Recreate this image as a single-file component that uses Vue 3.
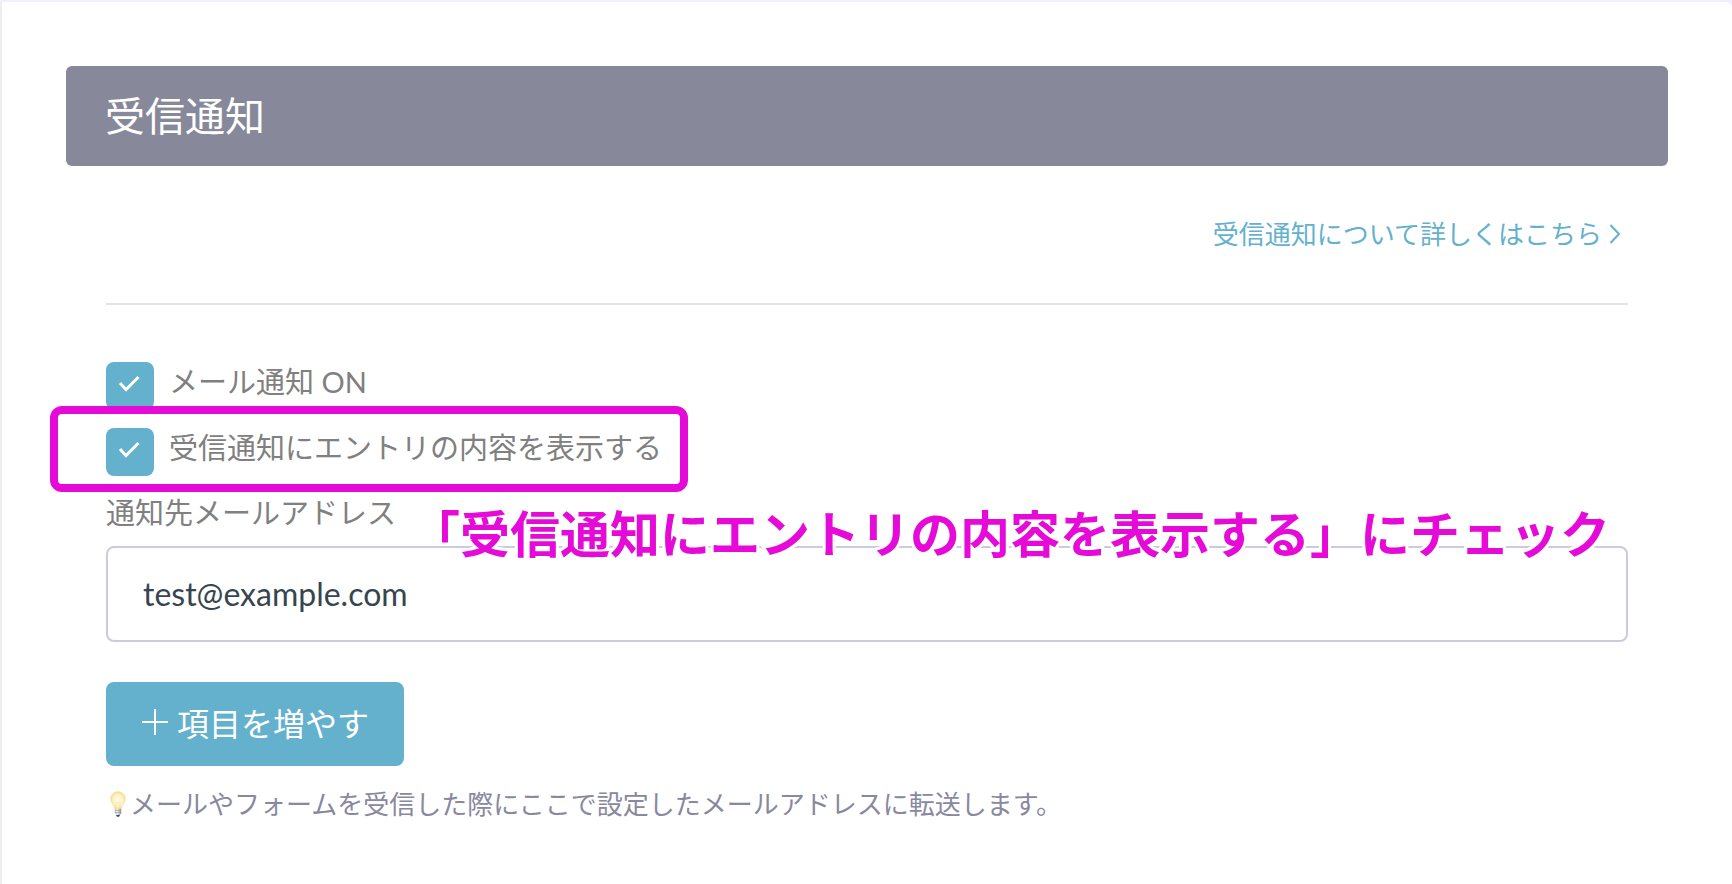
<script setup>
import { ref } from 'vue'

const mailOn = ref(true)
const showEntry = ref(true)
const email = ref('test@example.com')
</script>

<template>
  <main class="card">
    <h1 class="title">受信通知</h1>
    <section class="body">
      <div class="more">
        <a href="#" class="more-link">
          受信通知について詳しくはこちら
          <svg class="chevron" viewBox="0 0 12 20" aria-hidden="true"><path d="M1.5 1 10 10 1.5 19" /></svg>
        </a>
      </div>

      <form class="form" @submit.prevent>
        <label class="check-row">
          <span class="box">
            <input v-model="mailOn" type="checkbox" />
            <svg v-if="mailOn" viewBox="0 0 48 48" aria-hidden="true"><path d="M14 21 20 27.500 32.500 15" /></svg>
          </span>
          <span class="text">メール通知 ON</span>
        </label>

        <div class="marked">
          <label class="check-row">
            <span class="box">
              <input v-model="showEntry" type="checkbox" />
              <svg v-if="showEntry" viewBox="0 0 48 48" aria-hidden="true"><path d="M14 21 20 27.500 32.500 15" /></svg>
            </span>
            <span class="text">受信通知にエントリの内容を表示する</span>
          </label>
          <div class="frame"></div>
        </div>

        <div class="field">
          <label class="field-label" for="email">通知先メールアドレス</label>
          <input id="email" v-model="email" class="email" type="email" />
          <p class="callout">「受信通知にエントリの内容を表示する」にチェック</p>
        </div>

        <button type="button" class="add">
          <svg viewBox="0 0 28 28" aria-hidden="true"><path d="M14 1v26M1 14h26" /></svg>
          項目を増やす
        </button>
      </form>

      <p class="help">
        <svg viewBox="0 0 16 26" aria-hidden="true">
          <defs>
            <radialGradient id="glow" cx="50%" cy="50%" r="55%">
              <stop offset="0" stop-color="#fffdf0" />
              <stop offset="0.6" stop-color="#fff3c0" />
              <stop offset="1" stop-color="#f5d98a" />
            </radialGradient>
            <linearGradient id="metal">
              <stop offset="0" stop-color="#c8c8c8" />
              <stop offset="0.4" stop-color="#ececec" />
              <stop offset="1" stop-color="#8c8c8c" />
            </linearGradient>
          </defs>
          <path d="M8 .8C3.900.8.8 3.900.8 7.800c0 4 3.400 5.800 4 10h6.400c.6-4.200 4-6 4-10C15.200 3.900 12.100.8 8 .8Z" fill="url(#glow)" stroke="#f3dc9a" stroke-width=".8" />
          <path d="M6.500 17.500 5.800 11l1.500 1 .7-1 .7 1 1.500-1-.7 6.500" fill="none" stroke="#f7e3a6" stroke-width=".6" />
          <path d="M4.800 17.800h6.400v4.700L9.800 24H6.200l-1.400-1.500Z" fill="url(#metal)" />
          <path d="M4.800 19.500h6.400M4.800 21.500h6.400" stroke="#999" stroke-width=".6" />
          <path d="M6 24h4l-1 1.700H7Z" fill="#444" />
        </svg>
        <span>メールやフォームを受信した際にここで設定したメールアドレスに転送します。</span>
      </p>
    </section>
  </main>
</template>

<style>
body {
  margin: 0;
  background: #f0eeff;
}
#app {
  display: flow-root;
}
</style>

<style scoped>
.card {
  box-sizing: border-box;
  min-height: calc(100vh - 2px);
  margin-top: 2px;
  padding: 64px 64px 40px;
  border-left: 2px solid #eee;
  border-top-right-radius: 6px;
  background: #fff;
  color: #808080;
  font-family: "Lato", "Noto Sans CJK JP", sans-serif;
}
.title {
  margin: 0;
  padding: 20px 39px;
  border-radius: 6px;
  background: #88889b;
  color: #fff;
  font-size: 40px;
  font-weight: 400;
  line-height: 60px;
}
.body {
  padding: 0 40px;
}
.more {
  display: flex;
  justify-content: flex-end;
  padding: 48px 7px 49px;
  border-bottom: 2px solid #e4e4e4;
}
.more-link {
  display: flex;
  align-items: center;
  gap: 7px;
  color: #64b1ce;
  font-size: 26px;
  line-height: 40px;
  text-decoration: none;
}
.chevron {
  width: 12px;
  height: 20px;
}
.chevron path,
.box path,
.add path {
  fill: none;
  stroke: currentColor;
  stroke-width: 2;
}
.form {
  padding-top: 57px;
}
.check-row {
  display: flex;
  gap: 15px;
  height: 48px;
  margin-bottom: 18px;
}
.box {
  display: grid;
  width: 48px;
  height: 48px;
  color: #fff;
}
.box input,
.box svg {
  grid-area: 1 / 1;
  width: 48px;
  height: 48px;
  margin: 0;
}
.box input {
  appearance: none;
  border-radius: 8px;
  background: #64b1ce;
}
.box svg {
  pointer-events: none;
}
.box path {
  stroke-width: 3;
}
.text,
.field-label {
  font-size: 29px;
  line-height: 40px;
}
.marked {
  position: relative;
  width: fit-content;
}
.frame {
  position: absolute;
  inset: -22px -26px -16px -56px;
  border: 8px solid #e60ad8;
  border-radius: 12px;
  pointer-events: none;
}
.field {
  position: relative;
}
.field-label {
  display: block;
  margin-bottom: 14px;
  line-height: 38px;
}
.email {
  display: block;
  box-sizing: border-box;
  width: 100%;
  height: 96px;
  padding: 0 35px 2px;
  border: 2px solid #cbcbdf;
  border-radius: 8px;
  background: #fff;
  color: #36454f;
  font: 32px "Lato", "Noto Sans CJK JP", sans-serif;
}
.callout {
  position: absolute;
  top: 4px;
  right: 18px;
  margin: 0;
  color: #e60ad8;
  font-size: 50px;
  font-weight: 700;
  line-height: 72px;
  white-space: nowrap;
  -webkit-text-stroke: 6px #fff;
  paint-order: stroke fill;
  pointer-events: none;
}
.add {
  display: flex;
  align-items: center;
  gap: 8px;
  height: 84px;
  margin-top: 40px;
  padding: 0 35px 4px;
  border: 0;
  border-radius: 8px;
  background: #64b1ce;
  color: #fff;
  font: 32px "Lato", "Noto Sans CJK JP", sans-serif;
}
.add svg {
  width: 28px;
  height: 28px;
}
.help {
  display: flex;
  align-items: center;
  gap: 4px;
  margin: 18px 0 0;
  padding-left: 4px;
  color: #88889f;
  font-size: 26px;
  line-height: 40px;
}
.help svg {
  width: 16px;
  height: 26px;
}
</style>
